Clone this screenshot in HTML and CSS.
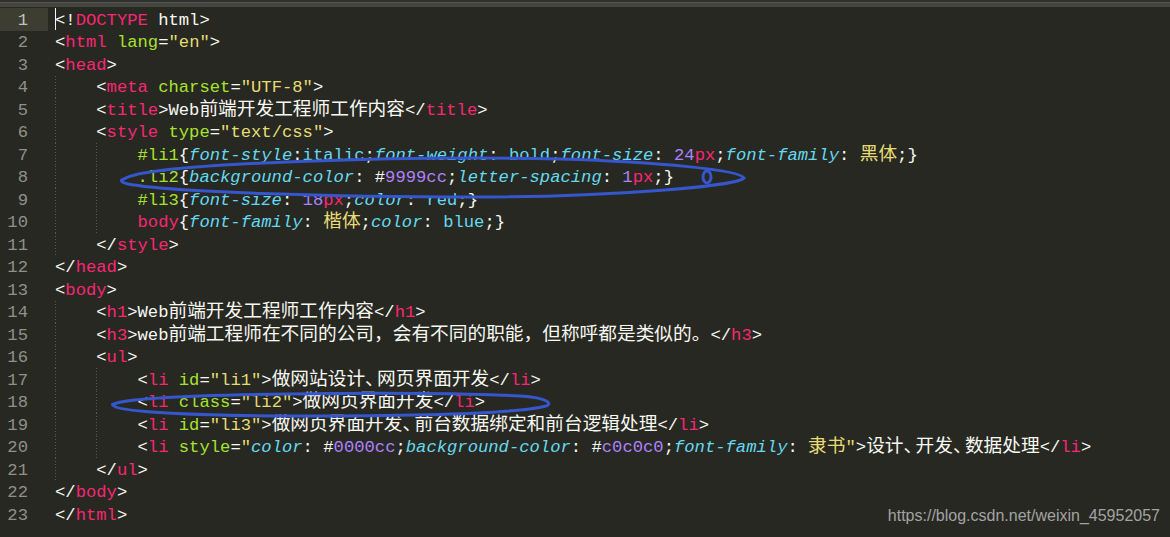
FILE: index.html
```html
<!DOCTYPE html>
<html lang="zh">
<head>
  <meta charset="UTF-8" />
  <title>index.html - Sublime Text</title>
  <link rel="stylesheet" href="styles.css">
</head>
<body>
  <div class="tabbar"></div>
  <div class="editor">
    <div class="row"><div class="ln cur">1</div><div class="code"><span class="caret"></span>&lt;!<span class="t">DOCTYPE</span> html&gt;</div></div>
    <div class="row"><div class="ln">2</div><div class="code">&lt;<span class="t">html</span> <span class="a">lang</span>=<span class="s">"en"</span>&gt;</div></div>
    <div class="row"><div class="ln">3</div><div class="code">&lt;<span class="t">head</span>&gt;</div></div>
    <div class="row"><div class="ln">4</div><div class="code g1">    &lt;<span class="t">meta</span> <span class="a">charset</span>=<span class="s">"UTF-8"</span>&gt;</div></div>
    <div class="row"><div class="ln">5</div><div class="code g1">    &lt;<span class="t">title</span>&gt;Web<span class="z">前端开发工程师工作内容</span>&lt;/<span class="t">title</span>&gt;</div></div>
    <div class="row"><div class="ln">6</div><div class="code g1">    &lt;<span class="t">style</span> <span class="a">type</span>=<span class="s">"text/css"</span>&gt;</div></div>
    <div class="row"><div class="ln">7</div><div class="code g2">        <span class="a">#li1</span>{<span class="p">font-style</span>:<span class="v">italic</span>;<span class="p">font-weight</span>: <span class="v">bold</span>;<span class="p">font-size</span>: <span class="n">24</span><span class="u">px</span>;<span class="p">font-family</span>: <span class="s z">黑体</span>;}</div></div>
    <div class="row"><div class="ln">8</div><div class="code g2">        <span class="a">.li2</span>{<span class="p">background-color</span>: #<span class="n">9999cc</span>;<span class="p">letter-spacing</span>: <span class="n">1</span><span class="u">px</span>;}</div></div>
    <div class="row"><div class="ln">9</div><div class="code g2">        <span class="a">#li3</span>{<span class="p">font-size</span>: <span class="n">18</span><span class="u">px</span>;<span class="p">color</span>: <span class="v">red</span>;}</div></div>
    <div class="row"><div class="ln">10</div><div class="code g2">        <span class="t">body</span>{<span class="p">font-family</span>: <span class="s z">楷体</span>;<span class="p">color</span>: <span class="v">blue</span>;}</div></div>
    <div class="row"><div class="ln">11</div><div class="code g1">    &lt;/<span class="t">style</span>&gt;</div></div>
    <div class="row"><div class="ln">12</div><div class="code">&lt;/<span class="t">head</span>&gt;</div></div>
    <div class="row"><div class="ln">13</div><div class="code">&lt;<span class="t">body</span>&gt;</div></div>
    <div class="row"><div class="ln">14</div><div class="code g1">    &lt;<span class="t">h1</span>&gt;Web<span class="z">前端开发工程师工作内容</span>&lt;/<span class="t">h1</span>&gt;</div></div>
    <div class="row"><div class="ln">15</div><div class="code g1">    &lt;<span class="t">h3</span>&gt;web<span class="z">前端工程师在不同的公司，会有不同的职能，但称呼都是类似的。</span>&lt;/<span class="t">h3</span>&gt;</div></div>
    <div class="row"><div class="ln">16</div><div class="code g1">    &lt;<span class="t">ul</span>&gt;</div></div>
    <div class="row"><div class="ln">17</div><div class="code g2">        &lt;<span class="t">li</span> <span class="a">id</span>=<span class="s">"li1"</span>&gt;<span class="z">做网站设计<span class="dun">、</span>网页界面开发</span>&lt;/<span class="t">li</span>&gt;</div></div>
    <div class="row"><div class="ln">18</div><div class="code g2">        &lt;<span class="t">li</span> <span class="a">class</span>=<span class="s">"li2"</span>&gt;<span class="z">做网页界面开发</span>&lt;/<span class="t">li</span>&gt;</div></div>
    <div class="row"><div class="ln">19</div><div class="code g2">        &lt;<span class="t">li</span> <span class="a">id</span>=<span class="s">"li3"</span>&gt;<span class="z">做网页界面开发<span class="dun">、</span>前台数据绑定和前台逻辑处理</span>&lt;/<span class="t">li</span>&gt;</div></div>
    <div class="row"><div class="ln">20</div><div class="code g2">        &lt;<span class="t">li</span> <span class="a">style</span>=<span class="s">"</span><span class="p">color</span>: #<span class="n">0000cc</span>;<span class="p">background-color</span>: #<span class="n">c0c0c0</span>;<span class="p">font-family</span>: <span class="s z">隶书</span><span class="s">"</span>&gt;<span class="z">设计<span class="dun">、</span>开发<span class="dun">、</span>数据处理</span>&lt;/<span class="t">li</span>&gt;</div></div>
    <div class="row"><div class="ln">21</div><div class="code g1">    &lt;/<span class="t">ul</span>&gt;</div></div>
    <div class="row"><div class="ln">22</div><div class="code">&lt;/<span class="t">body</span>&gt;</div></div>
    <div class="row"><div class="ln">23</div><div class="code">&lt;/<span class="t">html</span>&gt;</div></div>
  </div>

  <!-- hand-drawn marks over the code -->
  <svg class="marks" width="1170" height="537" viewBox="0 0 1170 537">
    <path d="M124,179 C150,162 420,156 560,159 C660,162 740,170 744,178 C738,186 610,197 480,197 C330,197 170,192 128,184 C120,182 120,180 124,179" />
    <ellipse cx="707" cy="177" rx="4" ry="6" />
    <path d="M114,404 C140,393 420,391 520,396 C550,398 552,404 546,406 C520,413 420,416 300,416 C200,416 120,412 114,406 C112,405 112,404 114,404" />
  </svg>

  <div class="watermark">https://blog.csdn.net/weixin_45952057</div>
</body>
</html>
```

FILE: styles.css
```css
body {
  margin: 0;
  background-color: #272822;
  color: #f8f8f2;
  font-family: "Liberation Mono", "DejaVu Sans Mono", monospace;
  font-size: 17.2px;
  width: 1170px;
  height: 537px;
  overflow: hidden;
  position: relative;
}
.tabbar {
  height: 7px;
  background: linear-gradient(#2f2f2d 0 2px, #55554f 2px 3px, #45453f 3px 7px);
}
.editor {
  padding-top: 1px;
}
.row {
  display: flex;
  height: 22.5px;
  line-height: 21px;
}
.row > div {
  box-sizing: border-box;
  height: 22.5px;
  padding-top: 1.5px;
}
.ln {
  width: 48px;
  padding-right: 20px;
  text-align: right;
  color: #90908a;
  flex-shrink: 0;
}
.ln.cur {
  background-color: #3e3d32;
  color: #c2c2bf;
}
.code {
  padding-left: 7px;
  white-space: pre;
  background-repeat: no-repeat;
}
/* indent guides */
.code.g1 {
  background-image: repeating-linear-gradient(to bottom, #5a5a52 0 1px, transparent 1px 3px);
  background-size: 1px 100%;
  background-position: 7px 0;
}
.code.g2 {
  background-image:
    repeating-linear-gradient(to bottom, #5a5a52 0 1px, transparent 1px 3px),
    repeating-linear-gradient(to bottom, #5a5a52 0 1px, transparent 1px 3px);
  background-size: 1px 100%, 1px 100%;
  background-position: 7px 0, 48px 0;
}
.caret {
  display: inline-block;
  width: 1px;
  height: 22px;
  margin-top: -1.5px;
  margin-right: -1px;
  vertical-align: top;
  background-color: #f8f8f0;
}
.t { color: #f92672; }
.a { color: #a6e22e; }
.s { color: #e6db74; }
.p { color: #66d9ef; font-style: italic; }
.v { color: #66d9ef; }
.n { color: #ae81ff; }
.u { color: #f92672; }
.z {
  font-family: "Noto Sans CJK SC", sans-serif;
  font-size: 18.7px;
  line-height: 0;
}
.dun {
  letter-spacing: -6.7px;
}
.marks {
  position: absolute;
  left: 0;
  top: 0;
  pointer-events: none;
}
.marks path,
.marks ellipse {
  fill: none;
  stroke: #3556cc;
  stroke-width: 3;
  stroke-linecap: round;
}
.watermark {
  position: absolute;
  right: 10px;
  top: 507px;
  font-family: "Liberation Sans", Arial, sans-serif;
  font-size: 16px;
  color: #a3a3a3;
}
```
